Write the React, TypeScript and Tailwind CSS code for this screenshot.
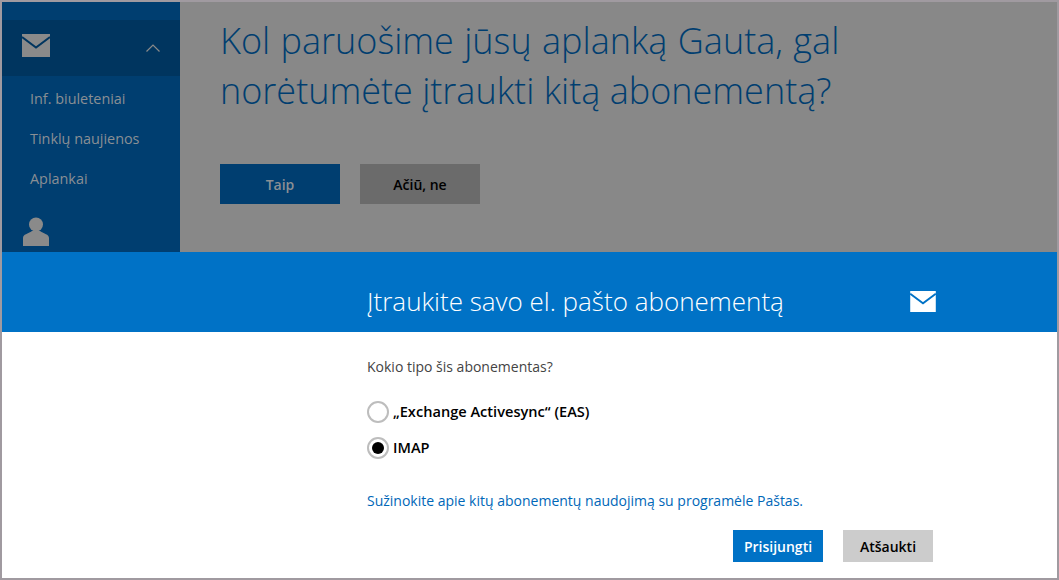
const font = { fontFamily: "'Open Sans', sans-serif" };

const MailIcon = ({ className, stroke }: { className: string; stroke: string }) => (
  <svg viewBox="0 0 28 23" className={className}>
    <rect width="28" height="23" fill="currentColor" />
    <path d="M0 3 L14 13.5 L28 3" fill="none" stroke={stroke} strokeWidth="2" />
  </svg>
);

const PersonIcon = () => (
  <svg viewBox="0 0 26 29" className="h-[29px] w-[26px] text-[#8a8a8a]">
    <circle cx="13" cy="7.5" r="7" fill="currentColor" />
    <path d="M0 29 V21 C0 17 5 17 9 14 H17 C21 17 26 17 26 21 V29 Z" fill="currentColor" />
  </svg>
);

const Radio = ({ checked }: { checked?: boolean }) => (
  <span className="flex h-[22px] w-[22px] items-center justify-center rounded-full border-2 border-[#bdbdbd] bg-white">
    {checked && <span className="h-3 w-3 rounded-full bg-black" />}
  </span>
);

const NavItem = ({ label }: { label: string }) => (
  <div className="flex h-10 items-center pl-7 text-[14.4px] text-[#8a8f94]">{label}</div>
);

export default function App() {
  return (
    <div className="flex h-[580px] w-[1059px] flex-col overflow-hidden border-2 border-[#a09aa0] bg-white" style={font}>
      <div className="flex h-[250px] shrink-0 overflow-hidden bg-[#888888]">
        <aside className="w-[178px] shrink-0 bg-[#003e70]">
          <div className="mt-[18px] flex h-[56px] items-center justify-between bg-[#00355f] px-5">
            <MailIcon className="mb-[5px] h-[23px] w-[28px] text-[#8a8a8a]" stroke="#00355f" />
            <svg viewBox="0 0 14 8" className="mb-[1px] h-2 w-[14px]">
              <path d="M0.5 7.5 L7 1 L13.5 7.5" fill="none" stroke="#8a8a8a" strokeWidth="1.2" />
            </svg>
          </div>
          <nav className="mt-[3px]">
            <NavItem label="Inf. biuleteniai" />
            <NavItem label="Tinklų naujienos" />
            <NavItem label="Aplankai" />
          </nav>
          <div className="mt-[18px] pl-[21px]">
            <PersonIcon />
          </div>
        </aside>
        <main className="pl-10 pt-[14px]">
          <h1 className="text-[36px] font-light leading-[50px] text-[#003e70]">
            <span className="[word-spacing:1px]">Kol paruošime jūsų aplanką Gauta, gal</span>
            <br />
            norėtumėte įtraukti kitą abonementą?
          </h1>
          <div className="mt-[48px] flex gap-5">
            <button className="h-10 w-[120px] bg-[#003e70] text-[14px] font-semibold text-[#8a8f94]">Taip</button>
            <button className="h-10 w-[120px] bg-[#6b6b6b] text-[14px] font-semibold text-black">Ačiū, ne</button>
          </div>
        </main>
      </div>
      <div className="flex h-20 shrink-0 bg-[#0072c6] pl-[365px] pr-[121px] pt-[30px]">
        <h2 className="grow text-[26px] font-light leading-[38px] text-white">Įtraukite savo el. pašto abonementą</h2>
        <MailIcon className="mt-[9px] h-[21px] w-[26px] text-white" stroke="#0072c6" />
      </div>
      <div className="grow pl-[365px] pr-[124px]">
        <p className="mt-[25px] text-[14px] leading-5 text-[#444444]">Kokio tipo šis abonementas?</p>
        <div className="mt-6 flex items-center gap-[4px] text-[14.6px] font-semibold text-black">
          <Radio />
          „Exchange Activesync“ (EAS)
        </div>
        <div className="mt-[14px] flex items-center gap-[4px] text-[14.6px] font-semibold text-black">
          <Radio checked />
          IMAP
        </div>
        <a className="mt-[32px] block text-[14px] leading-5 text-[#0067b8]">
          Sužinokite apie kitų abonementų naudojimą su programėle Paštas.
        </a>
        <div className="mt-[19px] flex justify-end gap-5">
          <button className="h-8 w-[90px] bg-[#0072c6] text-[14px] font-semibold text-white">Prisijungti</button>
          <button className="h-8 w-[90px] bg-[#cccccc] text-[14px] font-semibold text-black">Atšaukti</button>
        </div>
      </div>
    </div>
  );
}
